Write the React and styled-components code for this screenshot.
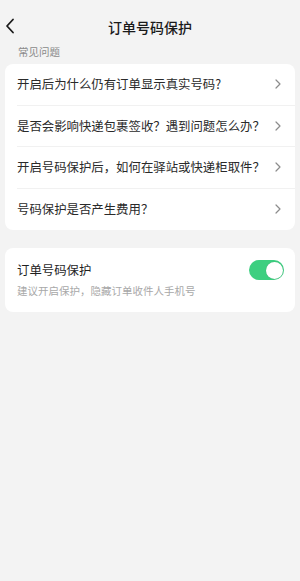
import React, { useState } from "react";
import styled, { createGlobalStyle } from "styled-components";

const questions = [
  "开启后为什么仍有订单显示真实号码?",
  "是否会影响快递包裹签收？遇到问题怎么办？",
  "开启号码保护后，如何在驿站或快递柜取件？",
  "号码保护是否产生费用？",
];

function App() {
  //STATE
  const [enabled, setEnabled] = useState(true);

  return (
    <>
      <GlobalStyle />
      <StyledPage>
        <StyledHeader>
          <StyledBack aria-label="返回">
            <svg width="10" height="16" viewBox="0 0 10 16">
              <path
                d="M8 1.5 L2 8 L8 14.5"
                fill="none"
                stroke="#1a1a1a"
                strokeWidth="1.8"
                strokeLinecap="round"
                strokeLinejoin="round"
              />
            </svg>
          </StyledBack>
          <h1>订单号码保护</h1>
        </StyledHeader>

        <StyledLabel>常见问题</StyledLabel>

        <StyledCard>
          {questions.map((q, i) => (
            <StyledRow key={q} $last={i === questions.length - 1}>
              <span>{q}</span>
              <svg width="6" height="10" viewBox="0 0 6 10">
                <path
                  d="M1 1 L5 5 L1 9"
                  fill="none"
                  stroke="#8c8c8c"
                  strokeWidth="1.2"
                  strokeLinecap="round"
                  strokeLinejoin="round"
                />
              </svg>
            </StyledRow>
          ))}
        </StyledCard>

        <StyledSettingCard>
          <StyledSettingText>
            <h3>订单号码保护</h3>
            <p>建议开启保护，隐藏订单收件人手机号</p>
          </StyledSettingText>
          <StyledToggle $on={enabled} onClick={() => setEnabled(!enabled)}>
            <span />
          </StyledToggle>
        </StyledSettingCard>
      </StyledPage>
    </>
  );
}

const GlobalStyle = createGlobalStyle`
  body {
    margin: 0;
    background: #f3f3f3;
    font-family: "Noto Sans CJK SC", "Noto Sans", sans-serif;
  }
`;

const StyledPage = styled.div`
  width: 300px;
  min-height: 581px;
  background: #f3f3f3;
`;

const StyledHeader = styled.div`
  position: relative;
  padding-top: 16px;
  height: 22px;
  display: flex;
  justify-content: center;
  h1 {
    margin: 0;
    font-size: 14px;
    line-height: 22px;
    font-weight: 500;
    color: #1a1a1a;
  }
`;

const StyledBack = styled.div`
  position: absolute;
  left: 5px;
  top: 18px;
  display: flex;
`;

const StyledLabel = styled.div`
  margin-top: 6px;
  padding-left: 18px;
  height: 16px;
  line-height: 16px;
  font-size: 10.5px;
  color: #8a8a8a;
`;

const StyledCard = styled.div`
  margin: 4px 5px 0;
  background: #fff;
  border-radius: 8px;
  overflow: hidden;
`;

const StyledRow = styled.div`
  height: 41.5px;
  margin-left: 12px;
  padding-right: 14px;
  display: flex;
  align-items: center;
  justify-content: space-between;
  border-bottom: ${(p) => (p.$last ? "none" : "1px solid #f1f1f1")};
  box-sizing: border-box;
  span {
    font-size: 12.4px;
    color: #2a2a2a;
  }
`;

const StyledSettingCard = styled.div`
  margin: 18px 5px 0;
  background: #fff;
  border-radius: 8px;
  padding: 12px 11px 13px 12px;
  display: flex;
  align-items: flex-start;
  justify-content: space-between;
`;

const StyledSettingText = styled.div`
  h3 {
    margin: 0;
    font-size: 12.4px;
    line-height: 20px;
    font-weight: 400;
    color: #1f1f1f;
  }
  p {
    margin: 3px 0 0;
    font-size: 10.5px;
    line-height: 16px;
    color: #a8a8a8;
  }
`;

const StyledToggle = styled.div`
  width: 35px;
  height: 20px;
  border-radius: 10px;
  background: ${(p) => (p.$on ? "#3dcf80" : "#dcdcdc")};
  position: relative;
  cursor: pointer;
  span {
    position: absolute;
    top: 1.5px;
    left: ${(p) => (p.$on ? "16.5px" : "1.5px")};
    width: 17px;
    height: 17px;
    border-radius: 50%;
    background: #fff;
    box-shadow: 0 0 1px rgba(0, 0, 0, 0.25);
  }
`;

export default App;
